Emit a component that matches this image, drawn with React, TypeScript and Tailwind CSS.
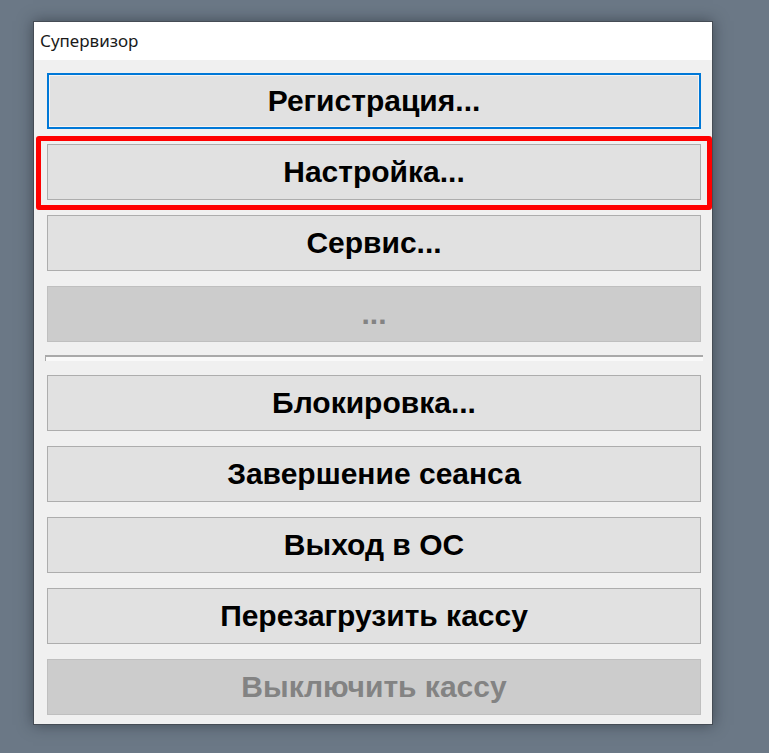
type Item = { label: string; disabled?: boolean; focused?: boolean; marked?: boolean };

const top: Item[] = [
  { label: "Регистрация...", focused: true },
  { label: "Настройка...", marked: true },
  { label: "Сервис..." },
  { label: "...", disabled: true },
];

const bottom: Item[] = [
  { label: "Блокировка..." },
  { label: "Завершение сеанса" },
  { label: "Выход в ОС" },
  { label: "Перезагрузить кассу" },
  { label: "Выключить кассу", disabled: true },
];

function MenuButton({ item }: { item: Item }) {
  const base =
    "h-[56px] w-full flex items-center justify-center text-[30px] font-bold leading-none";
  let skin = "bg-[#e1e1e1] border border-[#adadad] text-black";
  if (item.disabled) skin = "bg-[#cccccc] border border-[#bfbfbf] text-[#838383]";
  if (item.focused)
    skin = "bg-[#e1e1e1] border-2 border-[#0078d7] shadow-[inset_0_0_0_1px_#f4f4f4] text-black";

  return (
    <div className="relative">
      <button className={`${base} ${skin}`} style={{ fontFamily: '"Liberation Sans", Arial, sans-serif' }}>
        {item.label}
      </button>
      {item.marked && (
        <div className="pointer-events-none absolute -top-[8px] -bottom-[10px] -left-[11px] -right-[11px] border-[5px] border-[#ff0000] rounded-[3px]" />
      )}
    </div>
  );
}

export default function App() {
  return (
    <div className="min-h-[753px] w-full bg-[#6b7886] pt-[21px] pl-[33px]">
      <div className="w-[680px] h-[704px] flex flex-col border border-[#454c55] bg-[#f0f0f0] shadow-[0_0_14px_rgba(30,36,44,0.55)]">
        <div
          className="h-[38px] bg-white px-[6px] flex items-center text-[17px] text-[#1a1a1a]"
          style={{ fontFamily: '"Noto Sans", "Open Sans", sans-serif' }}
        >
          Супервизор
        </div>
        <div className="flex flex-col gap-[15px] pt-[13px] pl-[13px] pr-[11px]">
          {top.map((it) => (
            <MenuButton key={it.label} item={it} />
          ))}
          <div className="h-[6px] -mt-[2px] -mb-[1px] -mx-[2px] border-t-2 border-l border-[#a9a9a9] bg-[#f9f9f9]" />
          {bottom.map((it) => (
            <MenuButton key={it.label} item={it} />
          ))}
        </div>
      </div>
    </div>
  );
}
